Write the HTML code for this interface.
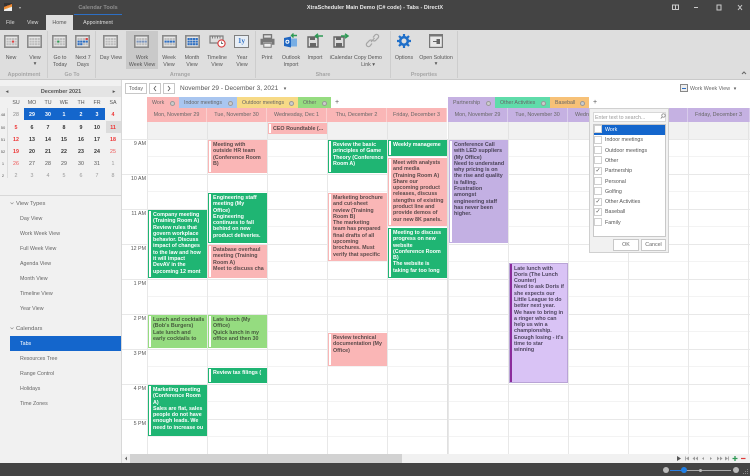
<!DOCTYPE html>
<html><head><meta charset="utf-8"><style>
html,body{margin:0;padding:0;background:#fff}
#p{position:relative;width:750px;height:476px;overflow:hidden;background:#fff;font-family:"Liberation Sans",sans-serif;font-size:5.3px;color:#555;filter:blur(.3px)}
#p div{position:absolute}
.t{white-space:nowrap;line-height:8px;height:8px;margin-top:.8px}
.c{transform:translateX(-50%);text-align:center}
.r{transform:translateX(-100%)}
.b{font-weight:bold}
.g{color:#a5a5a5;font-weight:bold}
.e{font-weight:bold;font-size:5.35px;line-height:6.3px;overflow:hidden;box-sizing:border-box;padding:2px 0 0 5px;color:#5b4a4a;white-space:nowrap}
.e:before{content:"";position:absolute;left:1px;top:1px;bottom:1px;width:1.5px;background:#fff}
.gr{background:#1fb573;color:#fff}
.pk{background:#fab6b6}
.lg{background:#95dc80;color:#455a3c}
.pu{background:#c3b0e3;color:#4a4358}
.lp{background:#d9c3f5;border:1px solid #b9a4d6;color:#4f4660;padding:1.5px 0 0 4px}
.lp:before{left:0;top:0;bottom:0;width:2px;background:#8b2c9b}
.tab{top:97px;height:11px;line-height:12.5px;color:#666;box-sizing:border-box;padding-left:5px;font-size:5.3px;white-space:nowrap}
.tab:after{content:"";position:absolute;right:4px;top:3.500px;width:3px;height:3px;border:1px solid #999;border-radius:50%;background:#ccc}
.h{top:108px;height:14px;line-height:15px;text-align:center;color:#666;font-size:5.4px;box-sizing:border-box;border-right:1px solid #fff5;white-space:nowrap;overflow:hidden}
.hl{background:#fab6b6}.hr{background:#c5b1e2}
svg{position:absolute;overflow:visible}
.cb{left:594px;width:8px;height:8px;background:#fff;border:1px solid #d0d0d0;box-sizing:border-box}
.ck{left:595.5px;color:#555;font-size:6px;line-height:8px}
.btn{background:#fff;border:1px solid #c8c8c8;box-sizing:border-box;text-align:center;color:#666;line-height:10px;font-size:5.3px}
</style></head><body><div id="p">
<svg width="0" height="0" style="left:0;top:0"><defs>
<symbol id="cal" viewBox="0 0 15 13"><rect x=".8" y=".8" width="13.4" height="11.4" fill="#e6e6e6" stroke="#8a8a8a" stroke-width="1.6"/><g fill="#bdbdbd"><rect x="2.5" y="3" width="2.200" height="2"/><rect x="5.2" y="3" width="2.200" height="2"/><rect x="7.9" y="3" width="2.200" height="2"/><rect x="10.6" y="3" width="2.200" height="2"/><rect x="2.5" y="5.6" width="2.200" height="2"/><rect x="5.2" y="5.6" width="2.200" height="2"/><rect x="7.9" y="5.6" width="2.200" height="2"/><rect x="10.6" y="5.6" width="2.200" height="2"/><rect x="2.5" y="8.2" width="2.200" height="2"/><rect x="5.2" y="8.2" width="2.200" height="2"/><rect x="7.9" y="8.2" width="2.200" height="2"/><rect x="10.6" y="8.2" width="2.200" height="2"/></g></symbol>
</defs></svg>

<!-- title bar -->
<div style="left:0;top:0;width:750px;height:30px;background:#444"></div>
<div style="left:4px;top:3px;width:8px;height:8px;background:linear-gradient(160deg,#333 35%,#e8792b 36%,#f0a040 60%,#eee 62%)"></div>
<div style="left:19px;top:7px;width:0;height:0;border:1.5px solid transparent;border-top:2px solid #bbb"></div>
<div class="t c b" style="left:98px;top:3px;color:#8e8e8e;font-size:5.5px">Calendar Tools</div>
<div style="left:74px;top:14px;width:48px;height:1px;background:#2d6fc4"></div>
<div class="t c b" style="left:375px;top:3px;color:#e8e8e8;font-size:5.5px">XtraScheduler Main Demo (C# code) - Tabs - DirectX</div>
<svg style="left:672px;top:4px" width="72" height="7" viewBox="0 0 72 7" fill="none" stroke="#ccc" stroke-width="1"><rect x="0.5" y="1" width="6" height="4.5"/><path d="M3.5 1v4.5"/><path d="M22 3.5h4"/><rect x="45" y="1" width="4" height="5"/><path d="M66 1l4 5M70 1l-4 5"/></svg>
<div class="t" style="left:6px;top:18px;color:#ddd">File</div>
<div class="t" style="left:27px;top:18px;color:#ddd">View</div>
<div style="left:46px;top:15px;width:27px;height:15px;background:#dedede"></div>
<div class="t c" style="left:59.5px;top:18px;color:#555">Home</div>
<div class="t c" style="left:98px;top:18px;color:#ddd">Appointment</div>

<!-- ribbon -->
<div style="left:0;top:30px;width:750px;height:49px;background:#dedede"></div>
<div style="left:0;top:79px;width:750px;height:1px;background:#c9c9c9"></div>
<div style="left:126px;top:31px;width:32px;height:38px;background:#c9c9c9"></div>
<div style="left:47px;top:31px;width:1px;height:47px;background:#cdcdcd"></div>
<div style="left:95px;top:31px;width:1px;height:47px;background:#cdcdcd"></div>
<div style="left:255px;top:31px;width:1px;height:47px;background:#cdcdcd"></div>
<div style="left:390px;top:31px;width:1px;height:47px;background:#cdcdcd"></div>
<div style="left:457px;top:31px;width:1px;height:47px;background:#cdcdcd"></div>

<svg style="left:4px;top:35px" width="15" height="13" viewBox="0 0 15 13"><use href="#cal"/><rect x="7.9" y="5.600" width="2.200" height="2" fill="#e04040"/></svg>
<svg style="left:27px;top:35px" width="15" height="13" viewBox="0 0 15 13"><use href="#cal"/></svg>
<svg style="left:52px;top:35px" width="15" height="13" viewBox="0 0 15 13"><use href="#cal"/><rect x="5.2" y="5.600" width="2.200" height="2" fill="#2a9a50"/></svg>
<svg style="left:75px;top:35px" width="15" height="13" viewBox="0 0 15 13"><use href="#cal"/><g fill="#2d6fc4"><rect x="2.500" y="5.600" width="2.200" height="2"/><rect x="5.200" y="5.600" width="2.200" height="2"/><rect x="7.900" y="5.600" width="2.200" height="2"/><rect x="10.600" y="5.600" width="2.200" height="2"/><rect x="2.500" y="8.200" width="2.200" height="2"/><rect x="5.200" y="8.200" width="2.200" height="2"/></g><rect x="10.600" y="3" width="2.200" height="2" fill="#e04040"/></svg>
<svg style="left:103px;top:35px" width="15" height="13" viewBox="0 0 15 13"><use href="#cal"/></svg>
<svg style="left:134px;top:35px" width="15" height="13" viewBox="0 0 15 13"><use href="#cal"/><g fill="#7a94bd"><rect x="2.500" y="5.600" width="2.200" height="2"/><rect x="5.200" y="5.600" width="2.200" height="2"/><rect x="7.900" y="5.600" width="2.200" height="2"/><rect x="10.600" y="5.600" width="2.200" height="2"/></g></svg>
<svg style="left:162px;top:35px" width="15" height="13" viewBox="0 0 15 13"><use href="#cal"/><g fill="#2d6fc4"><rect x="2.500" y="5.600" width="2.200" height="2"/><rect x="5.200" y="5.600" width="2.200" height="2"/><rect x="7.900" y="5.600" width="2.200" height="2"/><rect x="10.600" y="5.600" width="2.200" height="2"/></g></svg>
<svg style="left:185px;top:35px" width="15" height="13" viewBox="0 0 15 13"><use href="#cal"/><g fill="#2d6fc4"><rect x="2.500" y="3" width="2.200" height="2"/><rect x="5.200" y="3" width="2.200" height="2"/><rect x="7.900" y="3" width="2.200" height="2"/><rect x="10.600" y="3" width="2.200" height="2"/><rect x="2.500" y="5.600" width="2.200" height="2"/><rect x="5.200" y="5.600" width="2.200" height="2"/><rect x="7.900" y="5.600" width="2.200" height="2"/><rect x="10.600" y="5.600" width="2.200" height="2"/><rect x="2.500" y="8.200" width="2.200" height="2"/><rect x="5.200" y="8.200" width="2.200" height="2"/><rect x="7.900" y="8.200" width="2.200" height="2"/><rect x="10.600" y="8.200" width="2.200" height="2"/></g></svg>
<svg style="left:209px;top:35px" width="18" height="13" viewBox="0 0 18 13" fill="none"><path d="M1 1h13v7H1z" stroke="#7f7f7f" stroke-width="1.2"/><path d="M3.500 1v2.500M6 1v2.500M8.500 1v2.500M11 1v2.500" stroke="#7f7f7f"/><circle cx="12.500" cy="8.500" r="3.600" fill="#fff" stroke="#d83a3a" stroke-width="1.100"/><path d="M12.500 6.500v2h1.600" stroke="#444" stroke-width=".7"/></svg>
<div style="left:234px;top:35px;width:15px;height:13px;background:#e8eef5;border:1px solid #7f7f7f;box-sizing:border-box;color:#2d6fc4;font:bold 7px/11px 'Liberation Serif',serif;text-align:center">1y</div>

<svg style="left:260px;top:34px" width="15" height="14" viewBox="0 0 15 14"><path d="M3.500 .7h8v3.600h-8z" fill="none" stroke="#777" stroke-width="1.300"/><path d="M.5 4.800h14v6h-2.600V8.400H3.100v2.400H.5z" fill="#777"/><path d="M3.800 9.300h7.400v4H3.800z" fill="#eee" stroke="#777"/></svg>
<svg style="left:283px;top:33px" width="16" height="15" viewBox="0 0 16 15"><path d="M4 5.500h10v8H4z" fill="#78aee4"/><path d="M1 5l7-1.500v11L1 13z" fill="#1f66c1"/><circle cx="4.400" cy="8.800" r="1.500" fill="none" stroke="#fff"/><path d="M9 2.500h5M10.500 .5L8.500 2.500l2 2" stroke="#2e9a55" stroke-width="1.400" fill="none"/></svg>
<svg style="left:307px;top:33px" width="16" height="15" viewBox="0 0 16 15"><path d="M1 4h10v10H1z" fill="none" stroke="#666" stroke-width="1.400"/><path d="M3 4h5v3H3zM3 10h6v4H3z" fill="#666"/><path d="M9 3h7M11 .8L8.500 3l2.500 2.200" stroke="#2e9a55" stroke-width="1.500" fill="none"/></svg>
<svg style="left:333px;top:33px" width="16" height="15" viewBox="0 0 16 15"><path d="M1 4h10v10H1z" fill="none" stroke="#666" stroke-width="1.400"/><path d="M3 4h5v3H3zM3 10h6v4H3z" fill="#666"/><path d="M8 3h6.500M12 .8L15 3l-3 2.200" stroke="#2e9a55" stroke-width="1.500" fill="none"/></svg>
<svg style="left:365px;top:33px" width="15" height="15" viewBox="0 0 15 15" fill="none" stroke="#a5a5a5" stroke-width="1.200"><path d="M6 9l3.500-4"/><path d="M8 4.500l2-2.500a2 2 0 0 1 3 0a2 2 0 0 1 0 3l-2.500 2.500a2 2 0 0 1-2.500 0"/><path d="M7 10.500l-2 2.500a2 2 0 0 1-3 0a2 2 0 0 1 0-3l2.500-2.500a2 2 0 0 1 2.500 0"/></svg>
<svg style="left:397px;top:34px" width="14" height="14" viewBox="0 0 14 14"><circle cx="7" cy="7" r="3.800" fill="none" stroke="#1f6fc9" stroke-width="2.600"/><path d="M7 0v3M7 11v3M0 7h3M11 7h3M2 2l2 2M10 10l2 2M2 12l2-2M10 4l2-2" stroke="#1f6fc9" stroke-width="2.200"/></svg>
<svg style="left:429px;top:34px" width="14" height="14" viewBox="0 0 14 14"><rect x=".6" y=".6" width="12.800" height="12.800" fill="#e8e8e8" stroke="#777" stroke-width="1.200"/><rect x="0" y="0" width="14" height="2.500" fill="#777"/><path d="M4 7.500h4M8 5.500h2.500v4H8z" stroke="#666" fill="#666"/></svg>

<div class="t c" style="left:11px;top:53px">New</div>
<div class="t c" style="left:35px;top:53px">View</div><div class="t c" style="left:35px;top:59px">▾</div>
<div class="t c" style="left:60px;top:53px">Go to</div><div class="t c" style="left:60px;top:60px">Today</div>
<div class="t c" style="left:83px;top:53px">Next 7</div><div class="t c" style="left:83px;top:60px">Days</div>
<div class="t c" style="left:111px;top:53px">Day View</div>
<div class="t c" style="left:142px;top:53px">Work</div><div class="t c" style="left:142px;top:60px">Week View</div>
<div class="t c" style="left:169px;top:53px">Week</div><div class="t c" style="left:169px;top:60px">View</div>
<div class="t c" style="left:192px;top:53px">Month</div><div class="t c" style="left:192px;top:60px">View</div>
<div class="t c" style="left:217px;top:53px">Timeline</div><div class="t c" style="left:217px;top:60px">View</div>
<div class="t c" style="left:242px;top:53px">Year</div><div class="t c" style="left:242px;top:60px">View</div>
<div class="t c" style="left:267px;top:53px">Print</div>
<div class="t c" style="left:291px;top:53px">Outlook</div><div class="t c" style="left:291px;top:60px">Import</div>
<div class="t c" style="left:315px;top:53px">Import</div>
<div class="t c" style="left:341px;top:53px">iCalendar</div>
<div class="t c" style="left:368px;top:53px">Copy Demo</div><div class="t c" style="left:368px;top:60px">Link ▾</div>
<div class="t c" style="left:404px;top:53px">Options</div>
<div class="t c" style="left:436px;top:53px">Open Solution</div><div class="t c" style="left:436px;top:59px">▾</div>
<div class="t c g" style="left:24px;top:70px">Appointment</div>
<div class="t c g" style="left:72px;top:70px">Go To</div>
<div class="t c g" style="left:180px;top:70px">Arrange</div>
<div class="t c g" style="left:323px;top:70px">Share</div>
<div class="t c g" style="left:424px;top:70px">Properties</div>
<svg style="left:741px;top:71px" width="6" height="4" viewBox="0 0 6 4"><path d="M1 3l2-2 2 2" fill="none" stroke="#666"/></svg>

<!-- left panel -->
<div style="left:0;top:80px;width:121px;height:384px;background:#f1f1f1"></div>
<div style="left:121px;top:80px;width:1px;height:384px;background:#d8d8d8"></div>
<div style="left:0;top:86px;width:121px;height:11px;background:#e4e4e4"></div>
<div class="t c b" style="left:61px;top:87px;color:#555;font-size:5.5px">December 2021</div>
<div class="t c" style="left:7px;top:87px">◂</div><div class="t c" style="left:114px;top:87px">▸</div>
<div class="t c" style="left:16px;top:98px">SU</div><div class="t c" style="left:32px;top:98px">MO</div><div class="t c" style="left:48px;top:98px">TU</div><div class="t c" style="left:64px;top:98px">WE</div><div class="t c" style="left:81px;top:98px">TH</div><div class="t c" style="left:97px;top:98px">FR</div><div class="t c" style="left:113px;top:98px">SA</div>
<div style="left:7px;top:108px;width:1px;height:70px;background:#ddd"></div>
<div style="left:24px;top:108px;width:81px;height:12px;background:#1466cc"></div>
<div style="left:106px;top:121px;width:15px;height:12px;background:#dcdcdc"></div>
<div class="t c" style="left:3px;top:110px;font-size:4px">48</div><div class="t c" style="left:3px;top:123px;font-size:4px">50</div><div class="t c" style="left:3px;top:135px;font-size:4px">51</div><div class="t c" style="left:3px;top:147px;font-size:4px">52</div><div class="t c" style="left:3px;top:159px;font-size:4px">1</div><div class="t c" style="left:3px;top:171px;font-size:4px">2</div>

<div class="t c" style="left:16px;top:110px;color:#888">28</div>
<div class="t c b" style="left:32px;top:110px;color:#fff">29</div><div class="t c b" style="left:48px;top:110px;color:#fff">30</div><div class="t c b" style="left:64px;top:110px;color:#fff">1</div><div class="t c b" style="left:81px;top:110px;color:#fff">2</div><div class="t c b" style="left:97px;top:110px;color:#fff">3</div><div class="t c b" style="left:113px;top:110px;color:#e33">4</div>
<div class="t c b" style="left:16px;top:123px;color:#e33">5</div><div class="t c b" style="left:32px;top:123px;color:#333">6</div><div class="t c b" style="left:48px;top:123px;color:#333">7</div><div class="t c b" style="left:64px;top:123px;color:#333">8</div><div class="t c b" style="left:81px;top:123px;color:#333">9</div><div class="t c b" style="left:97px;top:123px;color:#333">10</div><div class="t c b" style="left:113px;top:123px;color:#e33">11</div>
<div class="t c b" style="left:16px;top:135px;color:#e33">12</div><div class="t c b" style="left:32px;top:135px;color:#333">13</div><div class="t c b" style="left:48px;top:135px;color:#333">14</div><div class="t c b" style="left:64px;top:135px;color:#333">15</div><div class="t c b" style="left:81px;top:135px;color:#333">16</div><div class="t c b" style="left:97px;top:135px;color:#333">17</div><div class="t c b" style="left:113px;top:135px;color:#e33">18</div>
<div class="t c b" style="left:16px;top:147px;color:#e33">19</div><div class="t c b" style="left:32px;top:147px;color:#333">20</div><div class="t c b" style="left:48px;top:147px;color:#333">21</div><div class="t c b" style="left:64px;top:147px;color:#333">22</div><div class="t c b" style="left:81px;top:147px;color:#333">23</div><div class="t c b" style="left:97px;top:147px;color:#333">24</div><div class="t c" style="left:113px;top:147px;color:#e55">25</div>
<div class="t c" style="left:16px;top:159px;color:#e55">26</div><div class="t c" style="left:32px;top:159px">27</div><div class="t c" style="left:48px;top:159px">28</div><div class="t c" style="left:64px;top:159px">29</div><div class="t c" style="left:81px;top:159px">30</div><div class="t c" style="left:97px;top:159px">31</div><div class="t c" style="left:113px;top:159px;color:#999">1</div>
<div class="t c" style="left:16px;top:171px;color:#999">2</div><div class="t c" style="left:32px;top:171px;color:#999">3</div><div class="t c" style="left:48px;top:171px;color:#999">4</div><div class="t c" style="left:64px;top:171px;color:#999">5</div><div class="t c" style="left:81px;top:171px;color:#999">6</div><div class="t c" style="left:97px;top:171px;color:#999">7</div><div class="t c" style="left:113px;top:171px;color:#999">8</div>
<div style="left:0;top:195px;width:121px;height:1px;background:#d8d8d8"></div>

<svg style="left:10px;top:202px" width="4" height="3" viewBox="0 0 4 3"><path d="M.5 .5L2 2l1.500-1.500" fill="none" stroke="#888" stroke-width=".6"/></svg>
<div class="t" style="left:16px;top:199px;font-size:5.8px;color:#666">View Types</div>
<div class="t" style="left:20px;top:214px;color:#666">Day View</div>
<div class="t" style="left:20px;top:229px;color:#666">Work Week View</div>
<div class="t" style="left:20px;top:244px;color:#666">Full Week View</div>
<div class="t" style="left:20px;top:259px;color:#666">Agenda View</div>
<div class="t" style="left:20px;top:274px;color:#666">Month View</div>
<div class="t" style="left:20px;top:289px;color:#666">Timeline View</div>
<div class="t" style="left:20px;top:304px;color:#666">Year View</div>
<svg style="left:10px;top:327px" width="4" height="3" viewBox="0 0 4 3"><path d="M.5 .5L2 2l1.500-1.500" fill="none" stroke="#888" stroke-width=".6"/></svg>
<div class="t" style="left:16px;top:324px;font-size:5.8px;color:#666">Calendars</div>
<div style="left:10px;top:336px;width:111px;height:15px;background:#1466cc"></div>
<div class="t" style="left:20px;top:339px;color:#fff">Tabs</div>
<div class="t" style="left:20px;top:354px;color:#666">Resources Tree</div>
<div class="t" style="left:20px;top:369px;color:#666">Range Control</div>
<div class="t" style="left:20px;top:384px;color:#666">Holidays</div>
<div class="t" style="left:20px;top:399px;color:#666">Time Zones</div>

<!-- toolbar -->
<div class="btn" style="left:125px;top:83px;width:22px;height:11px">Today</div>
<div class="btn" style="left:149px;top:83px;width:12px;height:11px"></div>
<div class="btn" style="left:163px;top:83px;width:12px;height:11px"></div>
<svg style="left:149px;top:83px" width="26" height="11" viewBox="0 0 26 11" fill="none" stroke="#555" stroke-width=".8"><path d="M7 3L5 5.500 7 8M19 3l2 2.500L19 8"/></svg>
<div class="t" style="left:180px;top:84px;font-size:6.5px;color:#555">November 29 - December 3, 2021</div>
<div class="t c" style="left:285px;top:84px;font-size:5px">▾</div>
<svg style="left:680px;top:84px" width="8" height="8" viewBox="0 0 8 8"><rect x=".5" y=".5" width="7" height="7" fill="#eee" stroke="#888"/><path d="M2 4.500h4" stroke="#2d6fc4"/></svg>
<div class="t" style="left:690px;top:84px;color:#666">Work Week View</div>
<div class="t c" style="left:735px;top:84px;font-size:5px">▾</div>

<!-- tabs -->
<div class="tab" style="left:147px;width:32px;background:#fab6b6">Work</div>
<div class="tab" style="left:179px;width:58px;background:#a9c6f0">Indoor meetings</div>
<div class="tab" style="left:237px;width:61px;background:#f7da86">Outdoor meetings</div>
<div class="tab" style="left:298px;width:33px;background:#95dc80">Other</div>
<div class="t c" style="left:337px;top:98px;font-size:7px">+</div>
<div class="tab" style="left:448px;width:47px;background:#c5b1e2">Partnership</div>
<div class="tab" style="left:495px;width:55px;background:#5fdcaa">Other Activities</div>
<div class="tab" style="left:550px;width:39px;background:#f7c177">Baseball</div>
<div class="t c" style="left:595px;top:98px;font-size:7px">+</div>

<!-- day headers -->
<div class="h hl" style="left:147px;width:60px">Mon, November 29</div>
<div class="h hl" style="left:207px;width:60px">Tue, November 30</div>
<div class="h hl" style="left:267px;width:60px">Wednesday, Dec 1</div>
<div class="h hl" style="left:327px;width:60px">Thu, December 2</div>
<div class="h hl" style="left:387px;width:60px">Friday, December 3</div>
<div class="h hr" style="left:448px;width:60px">Mon, November 29</div>
<div class="h hr" style="left:508px;width:60px">Tue, November 30</div>
<div class="h hr" style="left:568px;width:60px">Wednesday, Dec 1</div>
<div class="h hr" style="left:628px;width:60px"></div>
<div class="h hr" style="left:688px;width:62px">Friday, December 3</div>

<!-- all day -->
<div style="left:147px;top:122px;width:300px;height:17px;background:#f1f1f1;background-image:repeating-linear-gradient(to right,#e3e3e3 0 1px,transparent 1px 60px)"></div>
<div style="left:448px;top:122px;width:302px;height:17px;background:#f1f1f1;background-image:repeating-linear-gradient(to right,#e3e3e3 0 1px,transparent 1px 60px)"></div>

<!-- grid -->
<div style="left:147px;top:139px;width:300px;height:315px;background-image:repeating-linear-gradient(to right,#e8e8e8 0 1px,transparent 1px 60px),repeating-linear-gradient(to bottom,#e8e8e8 0 1px,transparent 1px 17px,#f3f3f3 17px 18px,transparent 18px 35px)"></div>
<div style="left:447px;top:139px;width:1px;height:315px;background:#e0e0e0"></div>
<div style="left:448px;top:139px;width:302px;height:315px;background-image:repeating-linear-gradient(to right,#e8e8e8 0 1px,transparent 1px 60px),repeating-linear-gradient(to bottom,#e8e8e8 0 1px,transparent 1px 17px,#f3f3f3 17px 18px,transparent 18px 35px)"></div>
<div style="left:122px;top:139px;width:25px;height:315px;background-image:repeating-linear-gradient(to bottom,#e8e8e8 0 1px,transparent 1px 35px)"></div>
<div class="t r" style="left:146px;top:139px">9 AM</div>
<div class="t r" style="left:146px;top:174px">10 AM</div>
<div class="t r" style="left:146px;top:209px">11 AM</div>
<div class="t r" style="left:146px;top:244px">12 PM</div>
<div class="t r" style="left:146px;top:279px">1 PM</div>
<div class="t r" style="left:146px;top:314px">2 PM</div>
<div class="t r" style="left:146px;top:349px">3 PM</div>
<div class="t r" style="left:146px;top:384px">4 PM</div>
<div class="t r" style="left:146px;top:419px">5 PM</div>

<!-- events -->
<div class="e pk" style="left:268px;top:123px;width:59px;height:11px;padding-top:2.500px">CEO Roundtable (...</div>
<div class="e pk" style="left:208px;top:140px;width:59px;height:33px">Meeting with<br>outside HR team<br>(Conference Room<br>B)</div>
<div class="e gr" style="left:208px;top:193px;width:59px;height:50px">Engineering staff<br>meeting (My<br>Office)<br>Engineering<br>continues to fall<br>behind on new<br>product deliveries.</div>
<div class="e pk" style="left:208px;top:245px;width:59px;height:33px">Database overhaul<br>meeting (Training<br>Room A)<br>Meet to discuss cha</div>
<div class="e gr" style="left:148px;top:210px;width:59px;height:68px">Company meeting<br>(Training Room A)<br>Review rules that<br>govern workplace<br>behavior. Discuss<br>impact of changes<br>to the law and how<br>it will impact<br>DevAV in the<br>upcoming 12 mont</div>
<div class="e gr" style="left:328px;top:140px;width:59px;height:33px">Review the basic<br>principles of Game<br>Theory (Conference<br>Room A)</div>
<div class="e pk" style="left:328px;top:193px;width:59px;height:68px">Marketing brochure<br>and cut-sheet<br>review (Training<br>Room B)<br>The marketing<br>team has prepared<br>final drafts of all<br>upcoming<br>brochures. Must<br>verify that specific</div>
<div class="e gr" style="left:388px;top:140px;width:59px;height:16px">Weekly manageme</div>
<div class="e pk" style="left:388px;top:158px;width:59px;height:68px">Meet with analysts<br>and media<br>(Training Room A)<br>Share our<br>upcoming product<br>releases, discuss<br>stengths of existing<br>product line and<br>provide demos of<br>our new 8K panels.</div>
<div class="e gr" style="left:388px;top:228px;width:59px;height:50px">Meeting to discuss<br>progress on new<br>website<br>(Conference Room<br>B)<br>The website is<br>taking far too long</div>
<div class="e pu" style="left:449px;top:140px;width:59px;height:103px">Conference Call<br>with LED suppliers<br>(My Office)<br>Need to understand<br>why pricing is on<br>the rise and quality<br>is falling.<br>Frustration<br>amongst<br>engineering staff<br>has never been<br>higher.</div>
<div class="e lg" style="left:148px;top:315px;width:59px;height:33px">Lunch and cocktails<br>(Bob's Burgers)<br>Late lunch and<br>early cocktails to</div>
<div class="e lg" style="left:208px;top:315px;width:59px;height:33px">Late lunch (My<br>Office)<br>Quick lunch in my<br>office and then 30</div>
<div class="e gr" style="left:208px;top:368px;width:59px;height:15px">Review tax filings (</div>
<div class="e gr" style="left:148px;top:385px;width:59px;height:51px">Marketing meeting<br>(Conference Room<br>A)<br>Sales are flat, sales<br>people do not have<br>enough leads. We<br>need to increase ou</div>
<div class="e pk" style="left:328px;top:333px;width:59px;height:33px">Review technical<br>documentation (My<br>Office)</div>
<div class="e lp" style="left:509px;top:263px;width:59px;height:120px">Late lunch with<br>Doris (The Lunch<br>Counter)<br>Need to ask Doris if<br>she expects our<br>Little League to do<br>better next year.<br>We have to bring in<br>a ringer who can<br>help us win a<br>championship.<br>Enough losing - it's<br>time to star<br>winning</div>

<!-- popup -->
<div style="left:589px;top:108px;width:80px;height:145px;background:#f1f1f1;border:1px solid #d0d0d0;box-sizing:border-box"></div>
<div style="left:593px;top:112px;width:73px;height:10px;background:#fff;border:1px solid #d8d8d8;box-sizing:border-box"></div>
<div class="t" style="left:595px;top:113px;color:#999">Enter text to search...</div>
<svg style="left:660px;top:113px" width="6" height="7" viewBox="0 0 6 7" fill="none" stroke="#777" stroke-width=".7"><circle cx="3.500" cy="2.500" r="1.700"/><path d="M2.300 3.800L.8 5.500"/></svg>
<div style="left:593px;top:124px;width:73px;height:113px;background:#fff;border:1px solid #c8c8c8;box-sizing:border-box"></div>
<div style="left:594px;top:124.500px;width:71px;height:10px;background:#1466cc"></div>
<div class="cb" style="top:125px"></div><div class="t" style="left:605px;top:125px;color:#fff">Work</div>
<div class="cb" style="top:135.500px"></div><div class="t" style="left:605px;top:135.500px">Indoor meetings</div>
<div class="cb" style="top:146px"></div><div class="t" style="left:605px;top:146px">Outdoor meetings</div>
<div class="cb" style="top:156px"></div><div class="t" style="left:605px;top:156px">Other</div>
<div class="cb" style="top:166.500px"></div><div class="t ck" style="top:166px">✓</div><div class="t" style="left:605px;top:166.500px">Partnership</div>
<div class="cb" style="top:177px"></div><div class="t" style="left:605px;top:177px">Personal</div>
<div class="cb" style="top:187px"></div><div class="t" style="left:605px;top:187px">Golfing</div>
<div class="cb" style="top:197.500px"></div><div class="t ck" style="top:197px">✓</div><div class="t" style="left:605px;top:197.500px">Other Activities</div>
<div class="cb" style="top:207.500px"></div><div class="t ck" style="top:207px">✓</div><div class="t" style="left:605px;top:207.500px">Baseball</div>
<div class="cb" style="top:218px"></div><div class="t" style="left:605px;top:218px">Family</div>
<div class="btn" style="left:613px;top:239px;width:26px;height:12px">OK</div>
<div class="btn" style="left:641px;top:239px;width:25px;height:12px">Cancel</div>

<!-- bottom scroll strip -->
<div style="left:122px;top:454px;width:628px;height:9px;background:#f1f1f1"></div>
<div style="left:130px;top:454px;width:272px;height:9px;background:#d2d2d2"></div>
<svg style="left:124px;top:456px" width="4" height="5" viewBox="0 0 4 5"><path d="M3 .5L1 2.500 3 4.500z" fill="#666"/></svg>
<svg style="left:676px;top:455px" width="74" height="8" viewBox="0 0 74 8"><path d="M1 1l4 2.500-4 2.500z" fill="#555"/><g fill="#999"><path d="M9 1.500h.8v4H9zM13 1.500l-3 2 3 2z"/><path d="M19 1.500l-2.500 2 2.500 2zM22 1.500l-2.500 2 2.500 2z"/><path d="M28 2l-2 1.500 2 1.500z"/><path d="M34 2l2 1.500-2 1.500z"/><path d="M41 1.500l2.500 2-2.500 2zM44 1.500l2.500 2-2.500 2z"/><path d="M49 1.500l3 2-3 2zM52.200 1.500h.8v4h-.8z"/></g><path d="M56.500 3.500h5M59 1v5" stroke="#2e9a55" stroke-width="1.300"/><path d="M65 3.500h4.500" stroke="#e03a3a" stroke-width="1.200"/></svg>

<!-- status bar -->
<div style="left:0;top:463px;width:750px;height:13px;background:#444"></div>
<div style="left:663px;top:467px;width:6px;height:6px;border-radius:50%;background:#bbb"></div>
<div style="left:670px;top:469.500px;width:61px;height:1px;background:#aaa"></div>
<div style="left:670px;top:469.500px;width:14px;height:1px;background:#2d7fe0"></div>
<div style="left:681px;top:467px;width:6px;height:6px;border-radius:50%;background:#1f7fe6"></div>
<div style="left:699px;top:468.500px;width:3px;height:3px;border-radius:50%;background:#bbb"></div>
<div style="left:733px;top:467px;width:6px;height:6px;border-radius:50%;background:#bbb"></div>
<svg style="left:743px;top:469px" width="6" height="6" viewBox="0 0 6 6" fill="#888"><rect x="4" y="0" width="1" height="1"/><rect x="2" y="2" width="1" height="1"/><rect x="4" y="2" width="1" height="1"/><rect x="0" y="4" width="1" height="1"/><rect x="2" y="4" width="1" height="1"/><rect x="4" y="4" width="1" height="1"/></svg>
</div></body></html>
